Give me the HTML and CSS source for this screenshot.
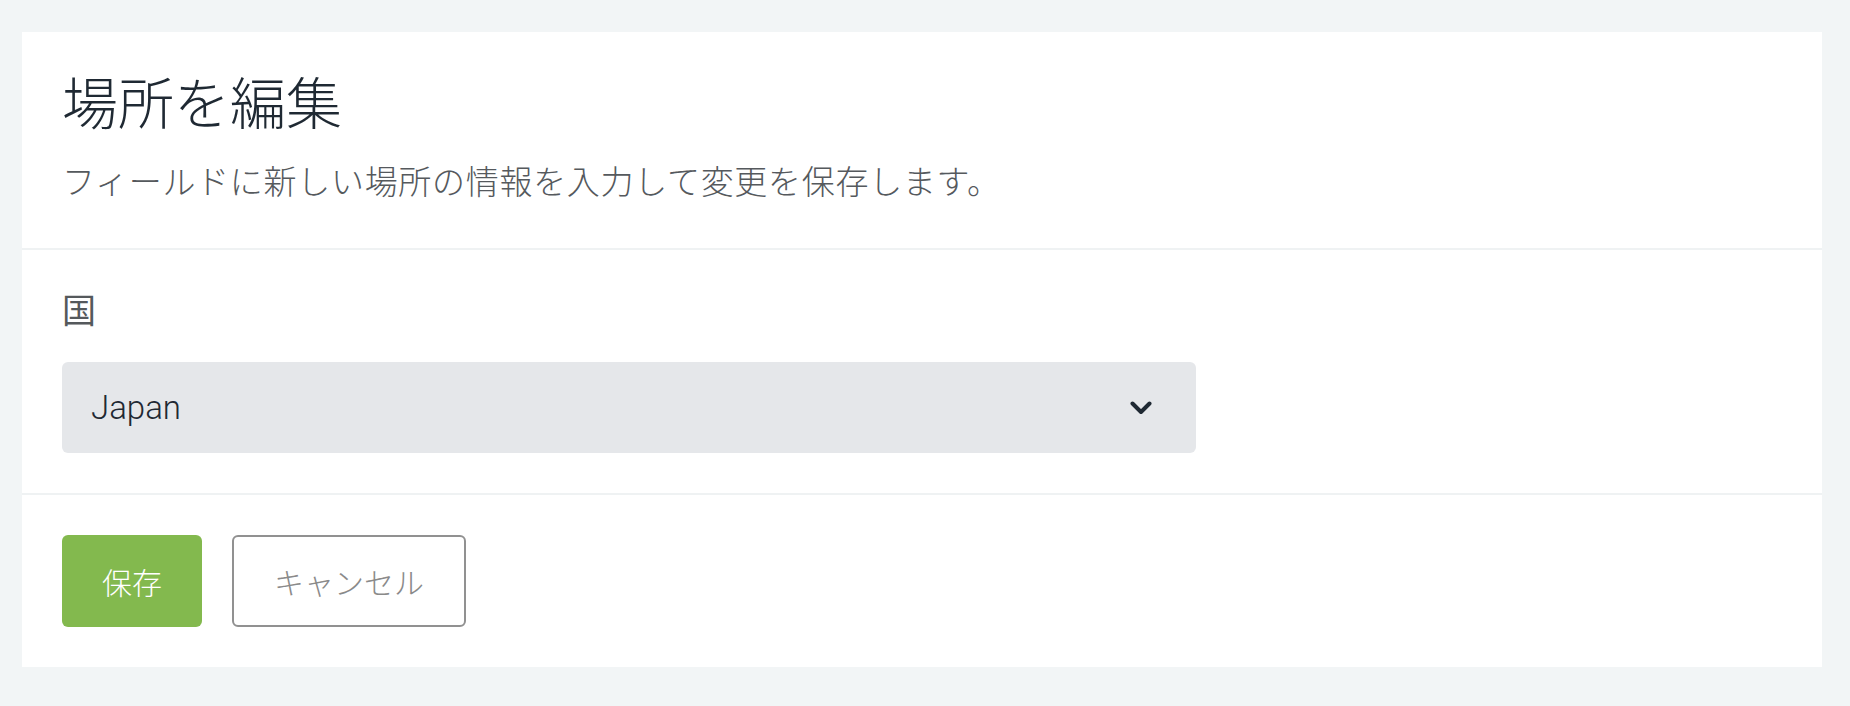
FILE: index.html
```html
<!DOCTYPE html>
<html lang="ja">
<head>
<meta charset="utf-8">
<title>場所を編集</title>
<link rel="stylesheet" href="styles.css">
</head>
<body>
<div class="page">
  <div class="card">
    <div class="section header">
      <h1 class="title">場所を編集</h1>
      <p class="subtitle">フィールドに新しい場所の情報を入力して変更を保存します。</p>
    </div>
    <div class="section body">
      <label class="label">国</label>
      <div class="select">
        <span class="select-value">Japan</span>
        <svg class="chevron" width="22" height="14" viewBox="0 0 22 14"><polyline points="2.5,2.5 11,11 19.5,2.5" fill="none" stroke="#1f2933" stroke-width="4" stroke-linecap="round" stroke-linejoin="round"/></svg>
      </div>
    </div>
    <div class="section footer">
      <button class="btn btn-primary">保存</button>
      <button class="btn btn-outline">キャンセル</button>
    </div>
  </div>
</div>
</body>
</html>
```

FILE: styles.css
```css
html, body {
  margin: 0;
  padding: 0;
  background: #f2f5f6;
}
body {
  font-family: Inter, "Noto Sans CJK JP", sans-serif;
  color: #1f2933;
}
.page {
  padding: 32px 28px 38px 22px;
}
.card {
  background: #ffffff;
  display: flex;
  flex-direction: column;
}
.section {
  padding: 40px 40px;
}
.section + .section {
  border-top: 2px solid #eff2f3;
}
.header {
  display: flex;
  flex-direction: column;
}
.title {
  margin: 0;
  font-size: 56px;
  line-height: 56px;
  font-weight: 300;
  color: #1f2933;
  font-family: "Noto Sans CJK JP", sans-serif;
}
.subtitle {
  margin: 24px 0 0;
  font-size: 33px;
  line-height: 56px;
  letter-spacing: 0.7px;
  font-weight: 300;
  color: #55595d;
  font-family: "Noto Sans CJK JP", sans-serif;
}
.body {
  display: flex;
  flex-direction: column;
}
.label {
  font-size: 34px;
  line-height: 38px;
  font-weight: 400;
  color: #55595c;
  font-family: "Noto Sans CJK JP", sans-serif;
}
.select {
  margin-top: 34px;
  width: 1134px;
  height: 91px;
  box-sizing: border-box;
  background: #e5e7ea;
  border-radius: 6px;
  display: flex;
  align-items: center;
  justify-content: space-between;
  padding: 0 44px 0 29px;
}
.select-value {
  font-family: Roboto, sans-serif;
  font-size: 33px;
  font-weight: 300;
  color: #1f2933;
}
.chevron {
  display: block;
}
.footer {
  display: flex;
  gap: 30px;
}
.btn {
  font-family: "Noto Sans CJK JP", sans-serif;
  font-size: 30px;
  line-height: 30px;
  font-weight: 300;
  height: 92px;
  box-sizing: border-box;
  border-radius: 6px;
  cursor: pointer;
}
.btn-primary {
  background: #83b94e;
  color: #ffffff;
  border: none;
  width: 140px;
  padding: 0;
}
.btn-outline {
  background: #ffffff;
  color: #8a8a8a;
  border: 2px solid #919191;
  width: 234px;
  padding: 0;
}
```
